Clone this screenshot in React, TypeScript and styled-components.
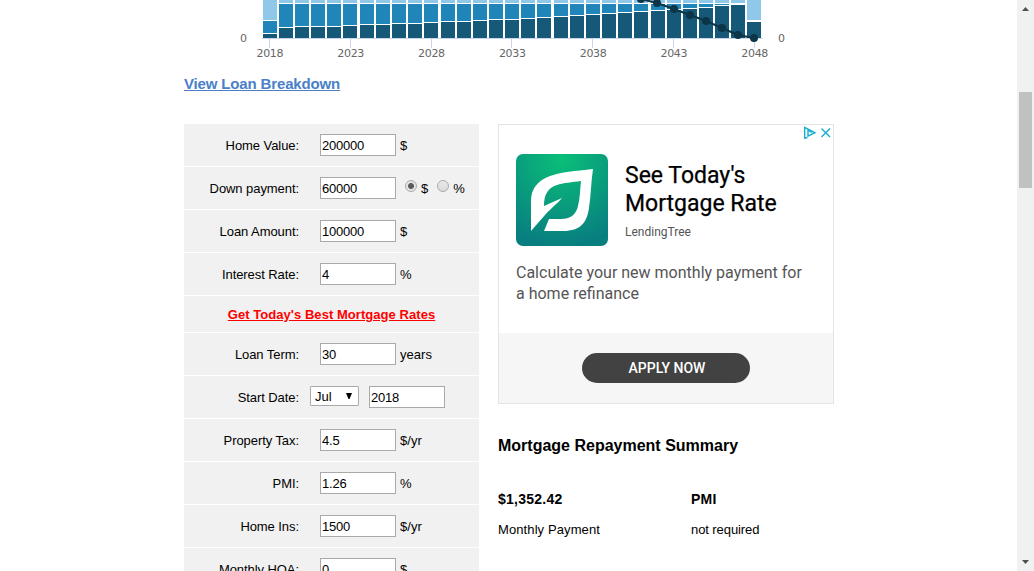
import React from "react";
import styled, { createGlobalStyle } from "styled-components";

const GlobalStyle = createGlobalStyle`
  html, body { margin: 0; padding: 0; height: 571px; overflow: hidden; background: #fff; }
  *, *::before, *::after { box-sizing: border-box; }
  body { font-family: "Liberation Sans", Arial, sans-serif; font-size: 13px; color: #000; }
`;

const Viewport = styled.div`
  display: flex;
  width: 1034px;
  height: 571px;
  overflow: hidden;
`;

const Page = styled.main`
  flex: 1;
  display: flex;
  flex-direction: column;
  padding-left: 184px;
  overflow: hidden;
`;

const Chart = styled.svg`
  display: block;
  flex: none;
  width: 650px;
  height: 64px;
  font-family: "DejaVu Sans", Verdana, sans-serif;
  font-size: 11px;
  fill: #666;
`;

const BreakdownLink = styled.a`
  align-self: flex-start;
  margin-top: 10px;
  font-size: 15px;
  line-height: 20px;
  font-weight: bold;
  letter-spacing: -0.15px;
  color: #4a7fc8;
  text-decoration: underline;
`;

const Columns = styled.div`
  display: flex;
  align-items: flex-start;
  gap: 19px;
  margin-top: 30px;
`;

const Form = styled.form`
  display: flex;
  flex-direction: column;
  gap: 1px;
  width: 295px;
`;

const Row = styled.div`
  flex: none;
  display: flex;
  height: 42px;
  padding-top: 10px;
  background: #f1f1f1;
`;

const Label = styled.label`
  width: 115px;
  flex: none;
  text-align: right;
  line-height: 23px;
  white-space: nowrap;
  letter-spacing: -0.07px;
`;

const Field = styled.input<{ $gap?: number }>`
  width: 76px;
  height: 22px;
  margin: 0 0 0 ${(p) => p.$gap ?? 21}px;
  padding: 1px 1px 0;
  border: 1px solid #a9a9a9;
  border-radius: 0;
  outline: 0;
  background: #fff;
  font: 13px "Liberation Sans", Arial, sans-serif;
  letter-spacing: -0.23px;
  color: #000;
`;

const Unit = styled.span`
  margin-left: 4px;
  line-height: 23px;
  letter-spacing: 0.05px;
`;

const Radio = styled.span<{ $gap: number; $checked?: boolean }>`
  width: 12px;
  height: 12px;
  margin: 3px 0 0 ${(p) => p.$gap}px;
  border: 1px solid #aaa;
  border-radius: 50%;
  background: ${(p) =>
    p.$checked
      ? "radial-gradient(circle, #5c5c5c 0 2.6px, #e4e4e4 3.3px)"
      : "linear-gradient(#e8e8e8, #dcdcdc)"};
`;

const Month = styled.span`
  display: flex;
  align-items: center;
  justify-content: space-between;
  width: 49px;
  height: 20px;
  margin-left: 11px;
  padding: 0 6px 0 4px;
  border: 1px solid #a9a9a9;
  border-radius: 1px;
  background: #fff;
`;

const RatesRow = styled.div`
  flex: none;
  height: 36px;
  background: #f1f1f1;
  text-align: center;
  line-height: 37px;
`;

const RatesLink = styled.a`
  font-weight: bold;
  letter-spacing: 0.05px;
  color: #f00;
  text-decoration: underline;
`;

const Side = styled.div`
  width: 336px;
`;

const Ad = styled.section`
  position: relative;
  display: flex;
  flex-direction: column;
  height: 280px;
  border: 1px solid #e4e4e4;
  font-family: Roboto, sans-serif;
`;

const AdChoices = styled.svg`
  position: absolute;
  top: 1px;
  right: 2px;
`;

const AdHead = styled.div`
  display: flex;
  gap: 17px;
  padding: 29px 0 0 17px;
`;

const AdTitle = styled.h2`
  margin: 8px 0 0;
  font-size: 23px;
  line-height: 28px;
  font-weight: 400;
  -webkit-text-stroke: 0.25px #000;
  white-space: nowrap;
`;

const Advertiser = styled.div`
  margin-top: 6px;
  font-size: 12px;
  line-height: 16px;
  color: #555;
`;

const AdBody = styled.p`
  flex: 1;
  margin: 16px 0 0 17px;
  font-size: 16px;
  line-height: 21px;
  color: #555;
`;

const AdFooter = styled.div`
  display: flex;
  justify-content: center;
  align-items: center;
  height: 70px;
  background: #f6f6f6;
`;

const Apply = styled.button`
  width: 168px;
  height: 30px;
  margin: 0;
  padding: 0 0 0 2px;
  border: 0;
  border-radius: 15px;
  background: #424242;
  color: #fff;
  font: 500 14px Roboto, sans-serif;
`;

const SummaryTitle = styled.h3`
  margin: 32px 0 0;
  font-size: 16px;
  line-height: 20px;
  font-weight: bold;
`;

const Stats = styled.div`
  display: grid;
  grid-template-columns: 193px 1fr;
  margin-top: 33px;
`;

const StatValue = styled.div`
  font-size: 14px;
  line-height: 20px;
  font-weight: bold;
  letter-spacing: 0.25px;
`;

const StatName = styled.div<{ $spacing: number }>`
  margin-top: 11px;
  line-height: 20px;
  letter-spacing: ${(p) => p.$spacing}px;
`;

const Scrollbar = styled.div`
  display: flex;
  flex-direction: column;
  align-items: center;
  width: 17px;
  background: #f1f1f1;
`;

const Thumb = styled.div`
  width: 13px;
  height: 96px;
  margin: 75px 0 auto;
  background: #c1c1c1;
`;

const Arrow = styled.svg`
  display: block;
  width: 17px;
  height: 17px;
  fill: #505050;
`;

const darkTops = [
  34, 28, 27, 27, 27, 26, 25, 25, 24, 24, 23, 22, 22, 21, 20, 20, 19, 18, 17, 16, 15, 14, 13, 12,
  11, 10, 9, 8, 6, 5, 22,
];
const balance = [
  [625, -6], [641, -1], [657, 3], [674, 9], [690, 15], [706, 21], [722, 28], [738, 35], [754, 38],
];
const years = [2018, 2023, 2028, 2033, 2038, 2043, 2048];

// Bars are 16px apart; these ones take an extra pixel to fill the plot width.
const wideSteps = [6, 11, 18, 24];
const barX = (i: number) => 263 + i * 16 + wideSteps.filter((step) => step <= i).length;

function PaymentChart() {
  return (
    <Chart viewBox="184 0 650 64">
      {darkTops.map((top, i) => {
        const x = barX(i);
        const edge = i === 0 || i === 30;
        const lightEnd = edge ? 20 : 3;
        return (
          <g key={i} shapeRendering="crispEdges">
            <rect x={x} y="0" width="14" height={lightEnd} fill="#8fc8e8" />
            {top - lightEnd > 2 && (
              <rect x={x} y={lightEnd + 1} width="14" height={top - lightEnd - 2} fill="#2085b8" />
            )}
            <rect x={x} y={top} width="14" height={38 - top} fill="#155877" />
          </g>
        );
      })}
      <rect x="262" y="38" width="501" height="1" fill="#ccd6eb" />
      {years.map((year, i) => (
        <g key={year}>
          <rect x={Math.round(269 + (i * 2505) / 31)} y="39" width="1" height="9" fill="#ccd6eb" />
          <text x={256.5 + (i * 2505) / 31} y="57" textLength="27">{year}</text>
        </g>
      ))}
      <text x="240" y="42">0</text>
      <text x="778" y="42">0</text>
      <polyline points={balance.map((p) => p.join()).join(" ")} fill="none" stroke="#0c3547" strokeWidth="2" />
      {balance.map(([x, y]) => <circle key={x} cx={x} cy={y} r="4" fill="#0c3547" />)}
    </Chart>
  );
}

function AmountRow({ label, value, unit }: { label: string; value: string; unit: string }) {
  return (
    <Row>
      <Label>{label}</Label>
      <Field defaultValue={value} />
      <Unit>{unit}</Unit>
    </Row>
  );
}

function LeafLogo() {
  return (
    <svg width="92" height="92" viewBox="0 0 92 92">
      <defs>
        <radialGradient id="leaf" cx="50%" cy="5%" r="95%">
          <stop offset="0" stopColor="#0abf78" />
          <stop offset="1" stopColor="#087e80" />
        </radialGradient>
      </defs>
      <rect width="92" height="92" rx="7" fill="url(#leaf)" />
      <path
        fill="#fff"
        d="M77 15C59 17 45 18 34 22C21 27 15 35 15 47V77L29 61C35 54 40 51 46 44L28 52C28 40 32 34 41 31C47 29 56 28 65 27C64 36 64 44 62 52C60 61 54 65 45 65H33L28 77H47C65 77 71 68 73 54C75 41 75 28 77 15Z"
      />
    </svg>
  );
}

export default function App() {
  return (
    <>
      <GlobalStyle />
      <Viewport>
        <Page>
          <PaymentChart />
          <BreakdownLink>View Loan Breakdown</BreakdownLink>
          <Columns>
            <Form>
              <AmountRow label="Home Value:" value="200000" unit="$" />
              <Row>
                <Label>Down payment:</Label>
                <Field defaultValue="60000" />
                <Radio $gap={9} $checked />
                <Unit>$</Unit>
                <Radio $gap={9} />
                <Unit>%</Unit>
              </Row>
              <AmountRow label="Loan Amount:" value="100000" unit="$" />
              <AmountRow label="Interest Rate:" value="4" unit="%" />
              <RatesRow><RatesLink>Get Today's Best Mortgage Rates</RatesLink></RatesRow>
              <AmountRow label="Loan Term:" value="30" unit="years" />
              <Row>
                <Label>Start Date:</Label>
                <Month>
                  Jul
                  <svg width="6" height="6" viewBox="0 0 6 6"><path d="M0 0H6L3.5 6H2.5Z" /></svg>
                </Month>
                <Field $gap={10} defaultValue="2018" />
              </Row>
              <AmountRow label="Property Tax:" value="4.5" unit="$/yr" />
              <AmountRow label="PMI:" value="1.26" unit="%" />
              <AmountRow label="Home Ins:" value="1500" unit="$/yr" />
              <AmountRow label="Monthly HOA:" value="0" unit="$" />
            </Form>
            <Side>
              <Ad>
                <AdChoices width="30" height="14" viewBox="0 0 30 14" fill="none" stroke="#16aecb" strokeWidth="1.4">
                  <path d="M6.5 11.5L3.7 12.2V1.5L14 6.7L7 10.2V4.2L11 6.5" />
                  <path d="M20.5 2.5L29 11M29 2.5L20.5 11" />
                </AdChoices>
                <AdHead>
                  <LeafLogo />
                  <div>
                    <AdTitle>See Today's<br />Mortgage Rate</AdTitle>
                    <Advertiser>LendingTree</Advertiser>
                  </div>
                </AdHead>
                <AdBody>Calculate your new monthly payment for<br />a home refinance</AdBody>
                <AdFooter><Apply>APPLY NOW</Apply></AdFooter>
              </Ad>
              <SummaryTitle>Mortgage Repayment Summary</SummaryTitle>
              <Stats>
                <div>
                  <StatValue>$1,352.42</StatValue>
                  <StatName $spacing={0.1}>Monthly Payment</StatName>
                </div>
                <div>
                  <StatValue>PMI</StatValue>
                  <StatName $spacing={-0.08}>not required</StatName>
                </div>
              </Stats>
            </Side>
          </Columns>
        </Page>
        <Scrollbar>
          <Arrow viewBox="0 0 17 17"><path d="M5 11H12L8.5 7Z" /></Arrow>
          <Thumb />
          <Arrow viewBox="0 0 17 17"><path d="M5 6H12L8.5 10Z" /></Arrow>
        </Scrollbar>
      </Viewport>
    </>
  );
}
